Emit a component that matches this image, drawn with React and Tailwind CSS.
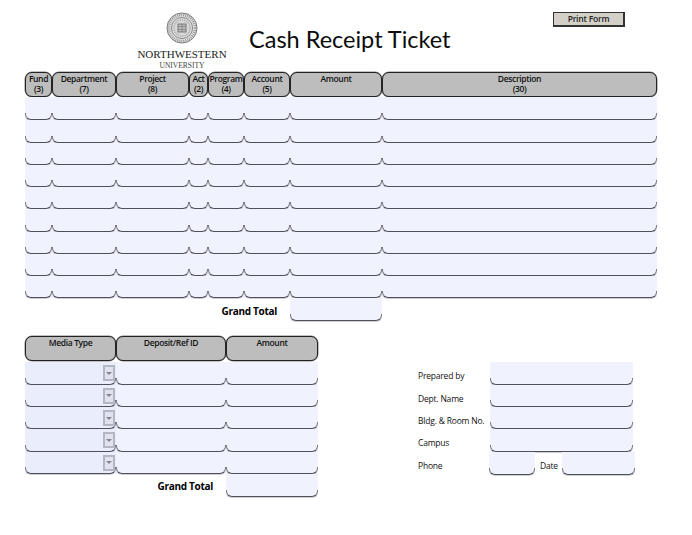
import React from 'react';

const font = "font-['Open_Sans',sans-serif]";

const mainCols = [
  { label: 'Fund', size: '(3)', w: 'w-[27px]' },
  { label: 'Department', size: '(7)', w: 'w-[64px]' },
  { label: 'Project', size: '(8)', w: 'w-[73px]' },
  { label: 'Act', size: '(2)', w: 'w-[19px]' },
  { label: 'Program', size: '(4)', w: 'w-[36px]' },
  { label: 'Account', size: '(5)', w: 'w-[46px]' },
  { label: 'Amount', size: '', w: 'w-[92px]' },
  { label: 'Description', size: '(30)', w: 'w-[275px]' },
];

const mediaCols = [
  { label: 'Media Type', w: 'w-[91px]' },
  { label: 'Deposit/Ref ID', w: 'w-[110px]' },
  { label: 'Amount', w: 'w-[92px]' },
];

const people = ['Prepared by', 'Dept. Name', 'Bldg. & Room No.', 'Campus'];

const HeaderCell = ({ label, size, w }) => (
  <div className={`${w} h-[25px] shrink-0 rounded-[7px] border border-[#222] bg-[#bdbdbd] pt-[1px] text-center text-[8.5px] font-semibold leading-[10px] tracking-[-0.35px] whitespace-nowrap text-[#111] shadow-[0_0_0_0.5px_rgba(50,50,50,0.6)]`}>
    <div className="-mx-1">{label}</div>
    {size && <div>{size}</div>}
  </div>
);

// input field: only the bottom edge is drawn, curling up at the corners
const Field = ({ w = '', h = 'h-[22.25px]', bg = 'bg-[#f0f2fe]' }) => (
  <div className={`${w} ${h} ${bg} flex shrink-0 items-end`}>
    <div className="h-[7px] w-full rounded-b-[6px] border-x border-b border-x-[#77777f] border-b-[#50505a] shadow-[0_1px_0_rgba(90,90,100,0.3)]" />
  </div>
);

const Seal = () => (
  <svg width="32" height="32" viewBox="0 0 32 32" className="block">
    <circle cx="16" cy="16" r="15" fill="#e4e4e4" stroke="#777" strokeWidth="1" />
    <circle cx="16" cy="16" r="13" fill="none" stroke="#999" strokeWidth="2.6" strokeDasharray="1 1" />
    <circle cx="16" cy="16" r="10.6" fill="#d8d8d8" stroke="#777" strokeWidth="0.8" />
    <circle cx="16" cy="16" r="8" fill="none" stroke="#aaa" strokeWidth="1.4" strokeDasharray="1.2 1" />
    <rect x="12" y="12" width="8" height="8" fill="#bbb" stroke="#666" strokeWidth="0.8" />
    <path d="M12 14.5h8M12 17.5h8M16 12v8" stroke="#777" strokeWidth="0.6" />
  </svg>
);

const App = () => {
  return (
    <div className={`${font} relative h-[535px] w-[692px] overflow-hidden bg-white text-black`}>
      {/* Letterhead */}
      <div className="flex h-[72px] pl-[137px]">
        <div className="flex w-[90px] flex-col items-center pt-[12px]">
          <Seal />
          <div className="mt-[4px] font-['Liberation_Serif',serif] text-[11px] leading-[13px] whitespace-nowrap text-[#222]">NORTHWESTERN</div>
          <div className="font-['Liberation_Serif',serif] text-[7.5px] leading-[9px] text-[#444]">UNIVERSITY</div>
        </div>
        <h1 className="ml-[22px] w-[304px] pt-[22px] font-['Lato',sans-serif] text-[23.5px] leading-[35px] whitespace-nowrap text-[#0b0b0b]">Cash Receipt Ticket</h1>
        <button className="mt-[12px] h-[15px] w-[72px] border border-r-2 border-b-2 border-[#333] bg-[#d4d0c8] text-[8.5px] leading-[12px] font-semibold tracking-[-0.2px] text-[#222]">
          Print Form
        </button>
      </div>

      {/* Account lines */}
      <div className="ml-[25px] w-[632px]">
        <div className="flex">
          {mainCols.map((c) => (
            <HeaderCell key={c.label} {...c} />
          ))}
        </div>
        {Array.from({ length: 9 }, (_, r) => (
          <div key={r} className="flex">
            {mainCols.map((c) => (
              <Field key={c.label} w={c.w} h={r === 0 ? 'h-[23.25px]' : 'h-[22.25px]'} />
            ))}
          </div>
        ))}
        <div className="flex h-[38px]">
          <div className="w-[265px] pt-[4px] pr-[13px] text-right text-[10px] leading-[18px] font-bold tracking-[-0.3px] whitespace-nowrap">Grand Total</div>
          <Field w="w-[92px]" h="h-[23px]" />
        </div>
      </div>

      <div className="flex">
        {/* Deposits */}
        <div className="ml-[25px] w-[293px]">
          <div className="flex">
            {mediaCols.map((c) => (
              <HeaderCell key={c.label} {...c} />
            ))}
          </div>
          <div className="h-[1px]" />
          {Array.from({ length: 5 }, (_, r) => (
            <div key={r} className="flex">
              <div className="relative">
                <Field w="w-[91px]" h="h-[22.4px]" bg="bg-[#e9edfc]" />
                <div className="absolute top-[3px] right-[1px] flex h-[16px] w-[12px] items-center justify-center border-2 border-[#b4b6c2] bg-[#dfe2f0]">
                  <svg width="6" height="3" viewBox="0 0 6 3" className="block">
                    <path d="M0 0h6L3 3z" fill="#85858f" />
                  </svg>
                </div>
              </div>
              <Field w="w-[110px]" h="h-[22.4px]" />
              <Field w="w-[92px]" h="h-[22.4px]" />
            </div>
          ))}
          <div className="flex">
            <div className="w-[201px] pt-[3px] pr-[13px] text-right text-[10px] leading-[18px] font-bold tracking-[-0.3px] whitespace-nowrap">Grand Total</div>
            <Field w="w-[92px]" h="h-[23px]" />
          </div>
        </div>

        {/* Contact details */}
        <div className="ml-[100px] pt-[26px] text-[8.5px] tracking-[-0.2px] text-[#111]">
          {people.map((p) => (
            <div key={p} className="flex">
              <div className="w-[72px] pt-[7px] leading-[14px] whitespace-nowrap">{p}</div>
              <Field w="w-[143px]" h="h-[22.4px]" />
            </div>
          ))}
          <div className="flex">
            <div className="w-[71px] pt-[7px] leading-[14px]">Phone</div>
            <Field w="w-[46px]" h="h-[23px]" />
            <div className="w-[27px] pt-[7px] pl-[5px] leading-[14px]">Date</div>
            <Field w="w-[73px]" h="h-[23px]" />
          </div>
        </div>
      </div>
    </div>
  );
};

export default App;
